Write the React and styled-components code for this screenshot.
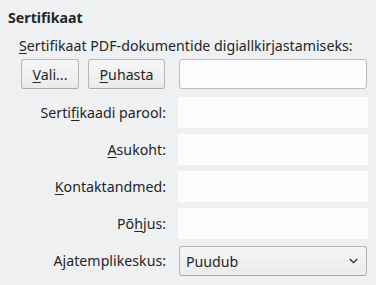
import React from 'react';
import styled, { createGlobalStyle } from 'styled-components';

const GlobalStyle = createGlobalStyle`
  html, body {
    margin: 0;
    padding: 0;
    background: #eff0f1;
  }
  body {
    font-family: "Noto Sans", "DejaVu Sans", sans-serif;
    font-size: 14.2px;
    color: #232627;
  }
`;

const Page = styled.div`
  width: 376px;
  height: 285px;
  box-sizing: border-box;
  padding: 8px 9px 0 8px;
  overflow: hidden;
`;

const SectionTitle = styled.div`
  font-weight: 700;
  line-height: 20px;
  height: 20px;
`;

const Caption = styled.div`
  line-height: 20px;
  height: 20px;
  margin-top: 8px;
  padding-left: 11px;
`;

const Form = styled.div`
  display: grid;
  grid-template-columns: 145px 188px;
  column-gap: 13px;
  margin-top: 3px;
  margin-left: 13px;
`;

const Row = styled.div`
  display: contents;
`;

const Cell = styled.div`
  height: ${({ $h }) => $h || 30}px;
  margin-top: ${({ $gap }) => $gap}px;
  display: flex;
  align-items: center;
  justify-content: ${({ $right }) => ($right ? 'flex-end' : 'flex-start')};
  gap: 9px;
`;

const Label = styled.span`
  line-height: 20px;
  white-space: nowrap;
`;

const Key = styled.span`
  text-decoration: underline;
  text-underline-offset: 2px;
  text-decoration-thickness: 1px;
`;

const Button = styled.button`
  box-sizing: border-box;
  height: 30px;
  width: ${({ $w }) => $w}px;
  padding: 0;
  font: inherit;
  color: #232627;
  background: linear-gradient(#f6f6f6, #ebebeb);
  border: 1px solid #b6b7b8;
  border-bottom-color: #a9aaab;
  border-radius: 3px;
`;

const Field = styled.div`
  box-sizing: border-box;
  height: 30px;
  width: 188px;
  background: #fcfcfc;
  border: 1px solid #babcbe;
  border-radius: 3px;
`;

const FlatField = styled.div`
  box-sizing: border-box;
  height: 31px;
  width: 190px;
  margin: 0 -1px;
  background: #fcfcfc;
`;

const Combo = styled.div`
  box-sizing: border-box;
  height: 30px;
  width: 188px;
  display: flex;
  align-items: center;
  justify-content: space-between;
  padding: 0 8px 0 6px;
  background: linear-gradient(#f6f6f6, #ebebeb);
  border: 1px solid #b6b7b8;
  border-bottom-color: #a9aaab;
  border-radius: 3px;
`;

const Chevron = () => (
  <svg width="9" height="6" viewBox="0 0 9 6">
    <path d="M0.8 1 L4.5 4.6 L8.2 1" fill="none" stroke="#232627" strokeWidth="1.2" />
  </svg>
);

const rows = [
  { label: <>Serti<Key>fi</Key>kaadi parool:</>, gap: 8 },
  { label: <><Key>A</Key>sukoht:</>, gap: 6 },
  { label: <><Key>K</Key>ontaktandmed:</>, gap: 6 },
  { label: <>Põ<Key>h</Key>jus:</>, gap: 6 },
];

export default function App() {
  return (
    <Page>
      <GlobalStyle />
      <SectionTitle>Sertifikaat</SectionTitle>
      <Caption><Key>S</Key>ertifikaat PDF-dokumentide digiallkirjastamiseks:</Caption>
      <Form>
        <Row>
          <Cell $gap={0}>
            <Button $w={58}><Key>V</Key>ali...</Button>
            <Button $w={77}><Key>P</Key>uhasta</Button>
          </Cell>
          <Cell $gap={0}><Field /></Cell>
        </Row>
        {rows.map((r, i) => (
          <Row key={i}>
            <Cell $gap={r.gap} $h={31} $right><Label>{r.label}</Label></Cell>
            <Cell $gap={r.gap} $h={31}><FlatField /></Cell>
          </Row>
        ))}
        <Row>
          <Cell $gap={7} $right><Label>A<Key>j</Key>atemplikeskus:</Label></Cell>
          <Cell $gap={7}>
            <Combo>
              <span>Puudub</span>
              <Chevron />
            </Combo>
          </Cell>
        </Row>
      </Form>
    </Page>
  );
}
